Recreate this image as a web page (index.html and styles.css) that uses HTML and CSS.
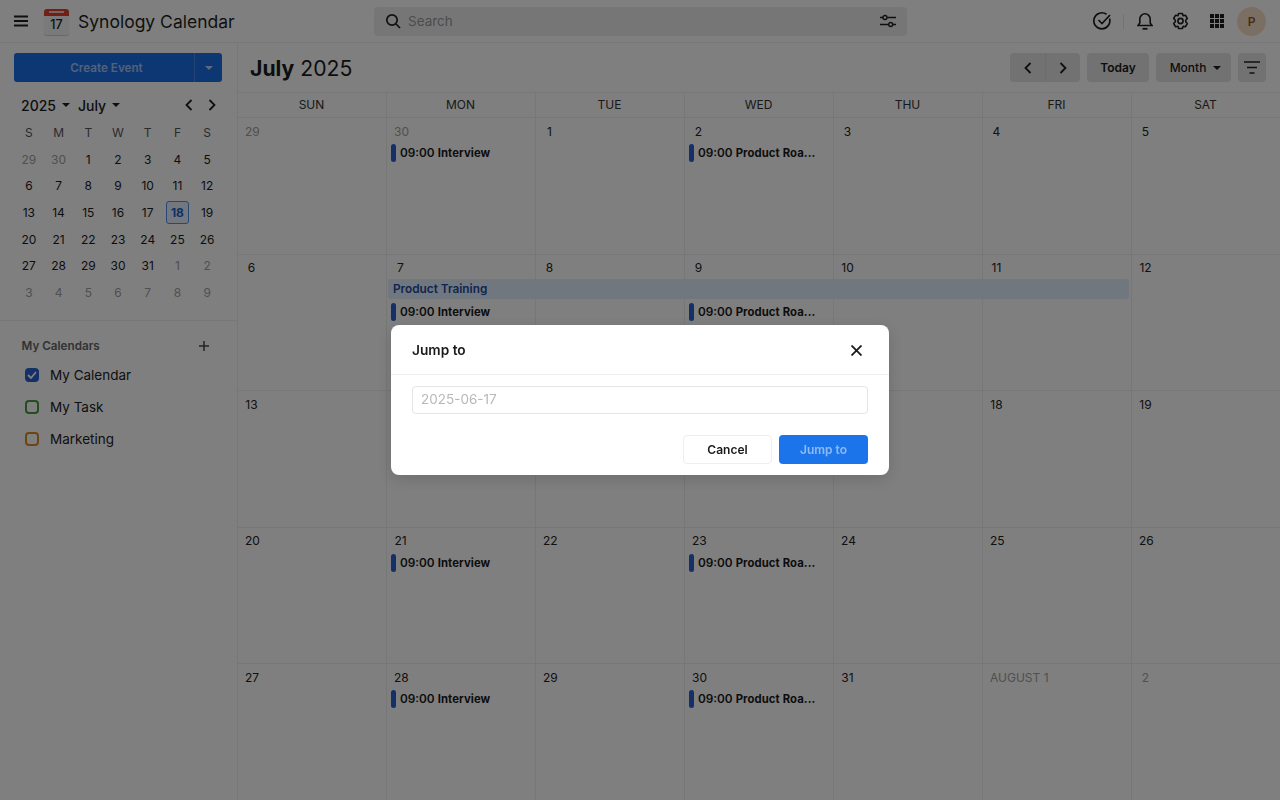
FILE: index.html
```html
<!DOCTYPE html>
<html lang="en">
<head>
<meta charset="utf-8">
<title>Synology Calendar</title>
<link rel="stylesheet" href="styles.css">
</head>
<body>
<div class="app">
  <header class="topbar">
    <div class="brand">
      <svg class="menu-icon" width="16" height="12" viewBox="0 0 16 12"><path d="M1 1.500h14M1 6h14M1 10.500h14" stroke="#1f1f1f" stroke-width="1.800" fill="none"/></svg>
      <div class="logo"><div class="logo-top"><span class="logo-bar"></span></div><div class="logo-num">17</div></div>
      <div class="app-name">Synology Calendar</div>
    </div>
    <div class="search">
      <svg width="16" height="16" viewBox="0 0 16 16" fill="none" stroke="#1f1f1f" stroke-width="1.700"><circle cx="7" cy="7" r="5.200"/><path d="M11 11l4 4"/></svg>
      <span class="search-text">Search</span>
      <svg class="search-filter" width="16" height="14" viewBox="0 0 16 14" fill="none" stroke="#1f1f1f" stroke-width="1.400"><path d="M0 3.500h3M7.500 3.500H16M0 10.500h8.500M13 10.500h3"/><circle cx="5" cy="3.500" r="2"/><circle cx="10.700" cy="10.500" r="2"/></svg>
    </div>
    <div class="top-actions">
      <svg class="ta-check" width="20" height="20" viewBox="0 0 20 20" fill="none" stroke="#1f1f1f" stroke-width="1.700"><path d="M17.500 7.500A8 8 0 1 1 14.500 3.300"/><path d="M6.500 9l3.500 3.500 8-8.500"/></svg>
      <span class="ta-divider"></span>
      <svg class="ta-bell" width="16" height="18" viewBox="0 0 16 18" fill="none" stroke="#1f1f1f" stroke-width="1.600"><path d="M1 13.500h14l-1.800-2.500V7a5.200 5.200 0 0 0-10.400 0v4z"/><path d="M5.500 16.800h5" stroke-width="1.800"/></svg>
      <svg class="ta-gear" width="17" height="18" viewBox="0 0 17 18" fill="none" stroke="#1f1f1f" stroke-width="1.600"><path d="M6.600 1.500h3.800l.7 2.200 2.300-.5 1.900 3.300-1.600 1.700v1.600l1.600 1.700-1.900 3.300-2.300-.5-.7 2.200H6.600l-.7-2.200-2.300.5-1.900-3.300 1.600-1.700V8.200L1.700 6.500l1.900-3.300 2.300.5z" stroke-linejoin="round"/><circle cx="8.500" cy="9" r="2.600"/></svg>
      <svg class="ta-grid" width="14" height="14" viewBox="0 0 14 14" fill="#1f1f1f"><rect width="4" height="4"/><rect x="5" width="4" height="4"/><rect x="10" width="4" height="4"/><rect y="5" width="4" height="4"/><rect x="5" y="5" width="4" height="4"/><rect x="10" y="5" width="4" height="4"/><rect y="10" width="4" height="4"/><rect x="5" y="10" width="4" height="4"/><rect x="10" y="10" width="4" height="4"/></svg>
      <div class="avatar">P</div>
    </div>
  </header>
  <div class="body">
    <aside class="sidebar">
      <div class="create">
        <span class="create-main">Create Event</span>
        <span class="create-caret"><i class="caret caret-light"></i></span>
      </div>
      <div class="mini-head">
        <span class="mini-sel">2025</span><i class="caret mini-caret"></i>
        <span class="mini-sel mini-month">July</span><i class="caret mini-caret"></i>
        <span class="mini-nav">
          <svg width="8" height="12" viewBox="0 0 8 12" fill="none" stroke="#1f1f1f" stroke-width="1.800"><path d="M6.500 1L1.500 6l5 5"/></svg>
          <svg width="8" height="12" viewBox="0 0 8 12" fill="none" stroke="#1f1f1f" stroke-width="1.800"><path d="M1.500 1l5 5-5 5"/></svg>
        </span>
      </div>
      <div class="mini-grid">
        <span class="mh">S</span><span class="mh">M</span><span class="mh">T</span><span class="mh">W</span><span class="mh">T</span><span class="mh">F</span><span class="mh">S</span>
        <span class="md off">29</span><span class="md off">30</span><span class="md">1</span><span class="md">2</span><span class="md">3</span><span class="md">4</span><span class="md">5</span>
        <span class="md">6</span><span class="md">7</span><span class="md">8</span><span class="md">9</span><span class="md">10</span><span class="md">11</span><span class="md">12</span>
        <span class="md">13</span><span class="md">14</span><span class="md">15</span><span class="md">16</span><span class="md">17</span><span class="md today"><b>18</b></span><span class="md">19</span>
        <span class="md">20</span><span class="md">21</span><span class="md">22</span><span class="md">23</span><span class="md">24</span><span class="md">25</span><span class="md">26</span>
        <span class="md">27</span><span class="md">28</span><span class="md">29</span><span class="md">30</span><span class="md">31</span><span class="md off">1</span><span class="md off">2</span>
        <span class="md off">3</span><span class="md off">4</span><span class="md off">5</span><span class="md off">6</span><span class="md off">7</span><span class="md off">8</span><span class="md off">9</span>
      </div>
      <div class="cal-list">
        <div class="cal-title"><span>My Calendars</span>
          <svg width="10" height="10" viewBox="0 0 10 10" stroke="#4a4a4a" stroke-width="1.500"><path d="M5 0v10M0 5h10"/></svg>
        </div>
        <div class="cal-item"><span class="cb cb-blue"><svg width="10" height="8" viewBox="0 0 10 8" fill="none" stroke="#fff" stroke-width="1.800"><path d="M1 4l3 3 5-6"/></svg></span>My Calendar</div>
        <div class="cal-item"><span class="cb cb-green"></span>My Task</div>
        <div class="cal-item"><span class="cb cb-orange"></span>Marketing</div>
      </div>
    </aside>
    <main class="main">
      <div class="toolbar">
        <h1 class="month-title"><b>July</b> 2025</h1>
        <div class="tools">
          <div class="btn-pair">
            <span class="pair-btn"><svg width="8" height="12" viewBox="0 0 8 12" fill="none" stroke="#1f1f1f" stroke-width="1.800"><path d="M6.500 1L1.500 6l5 5"/></svg></span>
            <span class="pair-btn pair-next"><svg width="8" height="12" viewBox="0 0 8 12" fill="none" stroke="#1f1f1f" stroke-width="1.800"><path d="M1.500 1l5 5-5 5"/></svg></span>
          </div>
          <span class="tool-btn today-btn">Today</span>
          <span class="tool-btn month-btn">Month<i class="caret"></i></span>
          <span class="tool-btn filter-btn"><svg width="16" height="13" viewBox="0 0 16 13" stroke="#1f1f1f" stroke-width="1.600"><path d="M0 1h16M3 6.500h10M5.500 12h5"/></svg></span>
        </div>
      </div>
      <div class="weekdays"><span>SUN</span><span>MON</span><span>TUE</span><span>WED</span><span>THU</span><span>FRI</span><span>SAT</span></div>
      <div class="weeks">
        <div class="week">
          <div class="day off"><span>29</span></div><div class="day off"><span>30</span></div><div class="day"><span>1</span></div><div class="day"><span>2</span></div><div class="day"><span>3</span></div><div class="day"><span>4</span></div><div class="day"><span>5</span></div>
          <div class="ev ev-mon ev-r2"><i></i>09:00 <b>Interview</b></div>
          <div class="ev ev-wed ev-r2"><i></i>09:00 <b>Product Roa...</b></div>
        </div>
        <div class="week">
          <div class="day"><span>6</span></div><div class="day"><span>7</span></div><div class="day"><span>8</span></div><div class="day"><span>9</span></div><div class="day"><span>10</span></div><div class="day"><span>11</span></div><div class="day"><span>12</span></div>
          <div class="span-ev">Product Training</div>
          <div class="ev ev-mon ev-r3"><i></i>09:00 <b>Interview</b></div>
          <div class="ev ev-wed ev-r3"><i></i>09:00 <b>Product Roa...</b></div>
        </div>
        <div class="week">
          <div class="day"><span>13</span></div><div class="day"><span>14</span></div><div class="day"><span>15</span></div><div class="day"><span>16</span></div><div class="day"><span>17</span></div><div class="day"><span>18</span></div><div class="day"><span>19</span></div>
        </div>
        <div class="week">
          <div class="day"><span>20</span></div><div class="day"><span>21</span></div><div class="day"><span>22</span></div><div class="day"><span>23</span></div><div class="day"><span>24</span></div><div class="day"><span>25</span></div><div class="day"><span>26</span></div>
          <div class="ev ev-mon ev-r2"><i></i>09:00 <b>Interview</b></div>
          <div class="ev ev-wed ev-r2"><i></i>09:00 <b>Product Roa...</b></div>
        </div>
        <div class="week">
          <div class="day"><span>27</span></div><div class="day"><span>28</span></div><div class="day"><span>29</span></div><div class="day"><span>30</span></div><div class="day"><span>31</span></div><div class="day off"><span>AUGUST 1</span></div><div class="day off"><span>2</span></div>
          <div class="ev ev-mon ev-r2"><i></i>09:00 <b>Interview</b></div>
          <div class="ev ev-wed ev-r2"><i></i>09:00 <b>Product Roa...</b></div>
        </div>
      </div>
    </main>
  </div>
</div>
<div class="overlay">
  <div class="dialog">
    <div class="dialog-head">
      <span>Jump to</span>
      <svg class="dialog-x" width="11" height="11" viewBox="0 0 11 11" stroke="#1a1a1a" stroke-width="1.800"><path d="M.5.500l10 10M10.500.500l-10 10"/></svg>
    </div>
    <div class="dialog-body">
      <div class="date-input">2025-06-17</div>
      <div class="dialog-actions">
        <span class="dlg-btn dlg-cancel">Cancel</span>
        <span class="dlg-btn dlg-ok">Jump to</span>
      </div>
    </div>
  </div>
</div>
</body>
</html>
```
FILE: styles.css
```css
* { box-sizing: border-box; }
html, body { margin: 0; height: 100%; }
body { font-family: Inter, "Liberation Sans", sans-serif; color: #1a1a1a; background: #fff; overflow: hidden; }
.app { width: 1280px; height: 800px; display: flex; flex-direction: column; overflow: hidden; }

.topbar { height: 43px; flex: none; display: flex; align-items: center; border-bottom: 1px solid #eee; position: relative; }
.brand { display: flex; align-items: center; width: 374px; flex: none; padding-left: 13px; }
.menu-icon { flex: none; }
.logo { width: 25px; height: 26px; margin-left: 15px; border-radius: 3px; background: #f4f4f4; box-shadow: 0 1px 1px rgba(0,0,0,.2); overflow: hidden; flex: none; margin-top: 1px; }
.logo-top { height: 7px; background: #e0402c; display: flex; justify-content: center; padding-top: 2px; }
.logo-bar { width: 15px; height: 2px; background: #f7c9bf; }
.logo-num { font-size: 12.500px; font-weight: 500; line-height: 17px; text-align: center; color: #222; }
.app-name { margin-left: 9px; font-size: 17.500px; font-weight: 400; white-space: nowrap; color: #1f1f1f; }
.search { width: 533px; height: 29px; flex: none; background: #ededed; border-radius: 4px; display: flex; align-items: center; padding: 0 11px; }
.search-text { margin-left: 7px; font-size: 13.500px; color: #999; }
.search-filter { margin-left: auto; }
.top-actions { flex: 1; display: flex; align-items: center; }
.ta-check { margin-left: 185px; flex: none; }
.ta-divider { width: 1px; height: 15px; background: #e6e6e6; margin-left: 11px; flex: none; }
.ta-bell { margin-left: 13px; flex: none; }
.ta-gear { margin-left: 19px; flex: none; }
.ta-grid { margin-left: 21px; flex: none; }
.avatar { width: 29px; height: 29px; border-radius: 50%; background: #f6dfc8; color: #8a5a1e; font-size: 12px; font-weight: 600; display: flex; align-items: center; justify-content: center; margin-left: 13px; flex: none; }

.body { flex: 1; display: flex; min-height: 0; }
.sidebar { width: 237px; flex: none; }
.create { margin: 10px 15px 0 14px; height: 29px; display: flex; background: #1b6ee6; border-radius: 3px; color: rgba(255,255,255,.6); font-size: 11.700px; font-weight: 600; }
.create-main { flex: 1; display: flex; align-items: center; justify-content: center; padding-left: 5px; }
.create-caret { width: 28px; display: flex; align-items: center; justify-content: center; border-left: 1px solid rgba(255,255,255,.2); }
.caret { display: inline-block; width: 0; height: 0; border-left: 4px solid transparent; border-right: 4px solid transparent; border-top: 4px solid #1f1f1f; }
.caret-light { border-top-color: rgba(255,255,255,.7); }
.mini-head { margin-top: 13px; height: 20px; padding: 0 21px; display: flex; align-items: center; }
.mini-sel { font-size: 14px; font-weight: 500; }
.mini-caret { margin-left: 6px; }
.mini-month { margin-left: 8px; }
.mini-nav { margin-left: auto; display: flex; gap: 15px; }
.mini-grid { margin: 4.500px 15px 0 14px; display: grid; grid-template-columns: repeat(7, 1fr); grid-auto-rows: 26.600px; font-size: 12px; }
.mh, .md { display: flex; align-items: center; justify-content: center; }
.mh { color: #555; }
.md.off { color: #a0a0a0; }
.today b { width: 23px; height: 23px; border: 1px solid #4d8ef0; border-radius: 3px; background: #e6effc; color: #1e60c8; font-weight: 700; display: flex; align-items: center; justify-content: center; }
.cal-list { margin-top: 14.500px; border-top: 1px solid #eee; padding: 16px 0 0; }
.cal-title { display: flex; justify-content: space-between; align-items: center; padding: 0 28px 0 21.500px; font-size: 11.700px; font-weight: 600; color: #666; height: 18px; margin-bottom: 4px; }
.cal-item { height: 32px; display: flex; align-items: center; padding-left: 25px; font-size: 13.500px; color: #222; }
.cb { width: 14px; height: 14px; border-radius: 4px; border: 2px solid; margin-right: 11px; display: flex; align-items: center; justify-content: center; }
.cb-blue { background: #2a5fd0; border-color: #2a5fd0; }
.cb-green { border-color: #4a9b3f; }
.cb-orange { border-color: #d98a2b; }

.main { flex: 1; min-width: 0; display: flex; flex-direction: column; box-shadow: inset 1px 0 0 #eee; }
.toolbar { height: 49px; flex: none; display: flex; align-items: center; justify-content: space-between; padding: 0 14px 0 13px; }
.month-title { margin: 0; font-size: 21.200px; font-weight: 400; }
.month-title b { font-weight: 700; }
.tools { display: flex; gap: 7px; align-items: center; }
.btn-pair { display: flex; height: 29px; background: #e4e4e4; border-radius: 4px; }
.pair-btn { width: 35px; display: flex; align-items: center; justify-content: center; }
.pair-next { border-left: 1px solid #d8d8d8; }
.tool-btn { height: 29px; background: #e4e4e4; border-radius: 4px; display: flex; align-items: center; justify-content: center; font-size: 12px; font-weight: 500; }
.today-btn { width: 62px; font-weight: 600; }
.month-btn { width: 75px; gap: 7px; padding-left: 4px; }
.filter-btn { width: 28px; }
.weekdays { height: 26px; flex: none; display: grid; grid-template-columns: repeat(7, 149px); border-top: 1px solid #eee; border-bottom: 1px solid #eee; font-size: 12px; color: #333; }
.weekdays span { display: flex; align-items: center; justify-content: center; padding: 0 1px 2px 0; border-left: 1px solid #eee; }
.weeks { flex: none; display: grid; grid-template-rows: repeat(5, 136.600px); }
.week { display: grid; grid-template-columns: repeat(7, 149px); grid-template-rows: 24px 22px 22px 1fr; border-bottom: 1px solid #eee; min-height: 0; }
.day { grid-row: 1 / -1; padding-top: 6.500px; font-size: 12px; line-height: 14px; border-left: 1px solid #eee; color: #222; }
.day span { display: inline-block; min-width: 27px; padding: 0 7px; text-align: center; white-space: nowrap; }
.week .day:nth-child(1) { grid-column: 1; }
.week .day:nth-child(2) { grid-column: 2; }
.week .day:nth-child(3) { grid-column: 3; }
.week .day:nth-child(4) { grid-column: 4; }
.week .day:nth-child(5) { grid-column: 5; }
.week .day:nth-child(6) { grid-column: 6; }
.week .day:nth-child(7) { grid-column: 7; }
.day.off { color: #a0a0a0; }
.ev { display: flex; align-items: center; height: 18px; font-size: 11.800px; font-weight: 600; white-space: pre; margin-left: 5px; align-self: center; color: #1a1a1a; }
.ev i { width: 5px; height: 18px; background: #2a5fd0; border-radius: 2.500px; margin-right: 4px; flex: none; }
.ev b { font-weight: 700; font-size: 11.300px; letter-spacing: .1px; }
.ev-mon { grid-column: 2; }
.ev-wed { grid-column: 4; }
.ev-r2 { grid-row: 2; }
.ev-r3 { grid-row: 3; }
.span-ev { grid-column: 2 / 7; grid-row: 2; height: 20px; align-self: center; margin: -1px 2px 0; padding-left: 5px; background: #e2eeff; border-radius: 3px; font-size: 11.800px; font-weight: 600; line-height: 20px; color: #1e4a9e; }

.overlay { position: fixed; inset: 0; background: rgba(0,0,0,.5); display: flex; align-items: center; justify-content: center; }
.dialog { width: 498px; height: 150px; background: #fff; border-radius: 8px; box-shadow: 0 4px 16px rgba(0,0,0,.15); }
.dialog-head { height: 50px; border-bottom: 1px solid #eee; display: flex; align-items: center; justify-content: space-between; padding: 0 27px 0 21px; font-size: 13.700px; font-weight: 600; color: #1a1a1a; }
.dialog-x { margin-top: 1px; }
.dialog-body { padding: 11px 21px 0 21px; }
.date-input { height: 28px; border: 1px solid #e6e6e6; border-radius: 4px; font-size: 13.500px; color: #b8b8b8; padding: 0 0 2px 8px; display: flex; align-items: center; }
.dialog-actions { margin-top: 21px; display: flex; justify-content: flex-end; gap: 7px; }
.dlg-btn { width: 89px; height: 29px; border-radius: 4px; font-size: 12px; font-weight: 600; display: flex; align-items: center; justify-content: center; }
.dlg-cancel { background: #fff; border: 1px solid #eee; color: #1a1a1a; }
.dlg-ok { background: #1b74ea; color: rgba(255,255,255,.5); }
```
